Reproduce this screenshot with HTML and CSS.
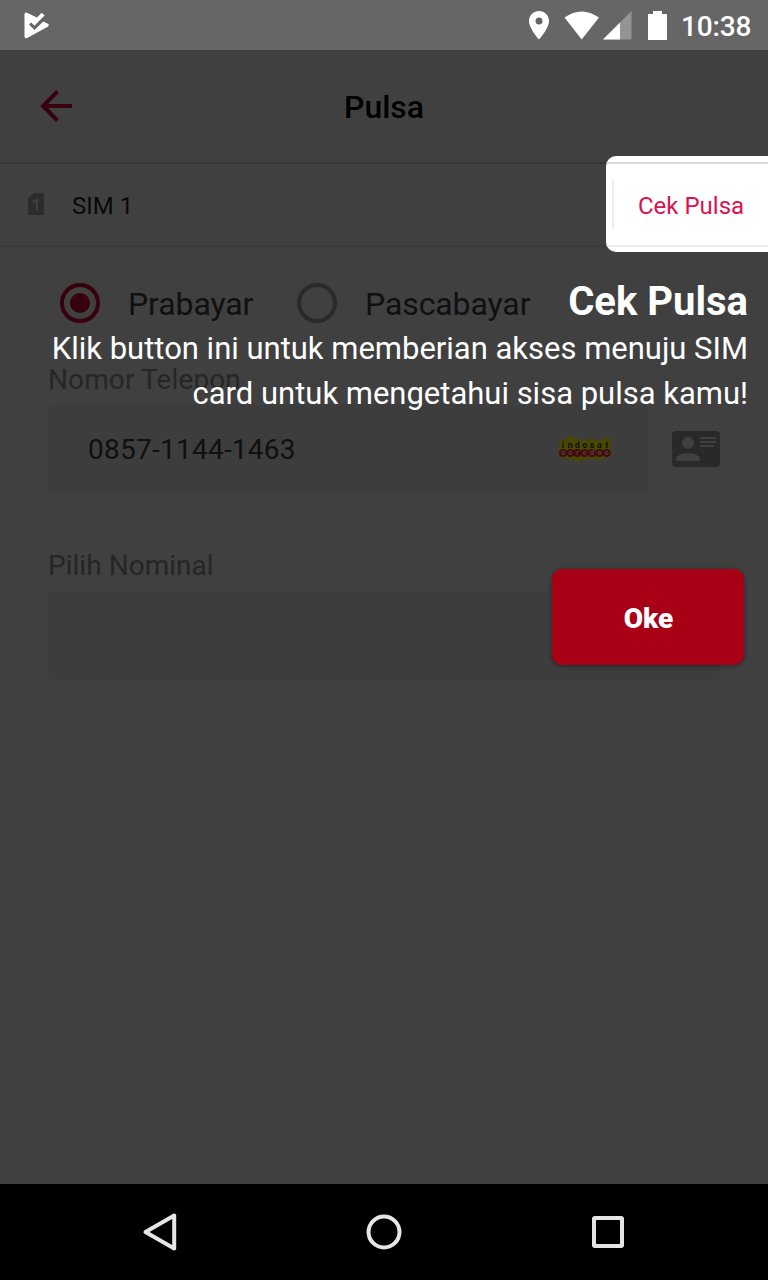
FILE: index.html
```html
<!DOCTYPE html>
<html lang="id">
<head>
<meta charset="utf-8">
<title>Pulsa</title>
<link rel="stylesheet" href="styles.css">
</head>
<body>
<div class="screen">
  <header class="status">
    <svg class="status-app" width="26" height="28" viewBox="0 0 26 28">
      <path d="M.5 2.400Q.6-.2 3 .8L12.900 5.500L17.700 .8L20.600 3.500L10.400 13.800L7.200 10.500L5 12.600L10.400 18L19.300 9.500L23.900 11.700Q26 13 23.700 14.700L3.200 26Q.6 26.900 .5 24.500Z" fill="#fff"/>
    </svg>
    <div class="status-icons">
      <svg width="20" height="29" viewBox="0 0 20 29"><path fill="#fff" fill-rule="evenodd" d="M10 0C4.400 0 0 4.400 0 10C0 17.500 10 28.500 10 28.500S20 17.500 20 10C20 4.400 15.600 0 10 0ZM10 6.500A3.500 3.500 0 1 1 10 13.500A3.500 3.500 0 0 1 10 6.500Z"/></svg>
      <svg class="wifi" width="36" height="29" viewBox="0 0 36 29"><path d="M.5 6.500Q17.500-5.500 35 6.500L17.700 28.500Z" fill="#fff"/></svg>
      <svg class="signal" width="29" height="29" viewBox="0 0 29 29"><path d="M28.500 0V28.500H0Z" fill="#949494"/><path d="M17 11.500V28.500H0Z" fill="#fff"/></svg>
      <svg class="battery" width="19" height="29" viewBox="0 0 19 29"><path d="M5 0H14V3H19V29H0V3H5Z" fill="#fff"/></svg>
      <span class="clock">10:38</span>
    </div>
  </header>

  <div class="topbar">
    <svg class="back" width="32" height="32" viewBox="0 0 32 32"><path d="M32 16H3M17.500 1.500L3 16L17.500 30.500" fill="none" stroke="#37000f" stroke-width="4"/></svg>
    <h1 class="title">Pulsa</h1>
  </div>

  <div class="sim-row">
    <svg class="sim-icon" width="16" height="22" viewBox="0 0 16 22"><path d="M6.500 0H14.500Q16 0 16 1.500V20.500Q16 22 14.500 22H1.500Q0 22 0 20.500V5Z" fill="#2c2c2c"/><path d="M4.500 9.300L8.800 7V17.500" fill="none" stroke="#404040" stroke-width="2"/></svg>
    <span class="sim-name">SIM 1</span>
  </div>

  <main class="form">
    <div class="radios">
      <svg width="40" height="40"><circle cx="20" cy="20" r="18" fill="none" stroke="#37000f" stroke-width="4"/><circle cx="20" cy="20" r="10" fill="#37000f"/></svg>
      <span class="radio-label first">Prabayar</span>
      <svg width="40" height="40"><circle cx="20" cy="20" r="18" fill="none" stroke="#2a2a2a" stroke-width="4"/></svg>
      <span class="radio-label">Pascabayar</span>
    </div>
    <div class="label">Nomor Telepon</div>
    <div class="phone-row">
      <div class="field phone">
        <span>0857-1144-1463</span>
        <svg class="operator" width="54" height="30" viewBox="0 0 54 30">
          <path d="M5 10V20M12.300 6V22M19.300 8V24M26.700 10V22M34 9V21.500M41.300 10V22M48.700 7V20" fill="none" stroke="#4a4800" stroke-width="8" stroke-linecap="round"/>
          <text class="op-top" x="5 12.300 19.300 26.700 34 41.300 48.700" y="13.500">indosat</text>
          <path d="M5 19H48.700" stroke="#45090f" stroke-width="3"/>
          <g fill="#45090f"><circle cx="5" cy="19" r="4"/><circle cx="12.300" cy="19" r="4"/><circle cx="19.300" cy="19" r="4"/><circle cx="26.700" cy="19" r="4"/><circle cx="34" cy="19" r="4"/><circle cx="41.300" cy="19" r="4"/><circle cx="48.700" cy="19" r="4"/></g>
          <text class="op-bottom" x="5 12.300 19.300 26.700 34 41.300 48.700" y="21.300">ooredoo</text>
        </svg>
      </div>
      <svg width="48" height="36" viewBox="0 0 48 36"><rect width="48" height="36" rx="4" fill="#292929"/><g fill="#404040"><circle cx="16" cy="12" r="6"/><path d="M4 30V28C4 24 12 22 16 22S28 24 28 28V30Z"/><path d="M28 6H44V8H28ZM28 10H44V12H28ZM28 14H42V16H28Z"/></g></svg>
    </div>
    <div class="label nominal-label">Pilih Nominal</div>
    <div class="field"></div>
  </main>

  <nav class="nav">
    <svg width="36" height="40" viewBox="0 0 36 40"><path d="M32.200 3.500V36.500L3.500 20Z" fill="none" stroke="#e6e6e6" stroke-width="4" stroke-linejoin="round"/></svg>
    <svg width="36" height="40" viewBox="0 0 36 40"><circle cx="18" cy="20" r="15.500" fill="none" stroke="#e6e6e6" stroke-width="4"/></svg>
    <svg width="36" height="40" viewBox="0 0 36 40"><rect x="4" y="6" width="28" height="28" rx="1" fill="none" stroke="#e6e6e6" stroke-width="4"/></svg>
  </nav>

  <div class="spotlight"><div class="spot-inner"><span class="divider"></span><span class="spot-text">Cek Pulsa</span></div></div>
  <section class="coach">
    <h2>Cek Pulsa</h2>
    <p>Klik button ini untuk memberian akses menuju SIM<br>card untuk mengetahui sisa pulsa kamu!</p>
    <button class="ok">Oke</button>
  </section>
</div>
</body>
</html>
```
FILE: styles.css
```css
* { box-sizing: border-box; }
body { margin: 0; font-family: Roboto, sans-serif; }
svg { display: block; flex: none; }
.screen {
  position: relative;
  width: 768px;
  height: 1280px;
  display: flex;
  flex-direction: column;
  background: #404040;
  overflow: hidden;
}
.status {
  height: 50px;
  padding: 0 17px 0 24px;
  display: flex;
  justify-content: space-between;
  align-items: center;
  background: #666;
  color: #fff;
}
.status-app { margin-top: 1px; }
.status-icons { display: flex; align-items: center; }
.wifi { margin-left: 15px; }
.signal { margin-left: 3px; }
.battery { margin-left: 16px; }
.clock {
  width: 70px;
  margin-left: 14px;
  font-size: 28px;
  font-weight: 500;
  line-height: 32px;
  padding-top: 3px;
  letter-spacing: -.15px;
}
.topbar {
  height: 114px;
  display: grid;
  grid-template-columns: 80px 1fr 80px;
  align-items: center;
  border-bottom: 2px solid #373737;
}
.back { margin-left: 40px; }
.title {
  margin: 2px 0 0;
  text-align: center;
  font-size: 32px;
  font-weight: 500;
  line-height: 40px;
  color: #000;
}
.sim-row {
  height: 83px;
  padding: 0 28px;
  display: flex;
  align-items: center;
  gap: 28px;
  border-bottom: 2px solid #3b3b3b;
  font-size: 24px;
  color: #080808;
}
.sim-icon { margin-bottom: 2px; }
.sim-name, .spot-text { padding-top: 2px; }
.form { flex: 1; padding: 36px 48px 0; }
.radios { display: flex; align-items: center; height: 40px; padding-left: 12px; }
.radio-label {
  margin-left: 28px;
  padding-top: 2px;
  font-size: 32px;
  line-height: 40px;
  letter-spacing: -.1px;
  color: #101010;
}
.first { flex: none; width: 169px; }
.label {
  margin-top: 40px;
  height: 34px;
  font-size: 28px;
  line-height: 34px;
  letter-spacing: .12px;
  color: #262626;
}
.phone-row { display: flex; align-items: center; gap: 24px; margin-top: 8px; }
.field { height: 88px; border-radius: 5px; background: #3d3d3d; }
.phone {
  width: 600px;
  padding: 0 36px 0 40px;
  display: flex;
  align-items: center;
  justify-content: space-between;
  font-size: 28px;
  letter-spacing: .25px;
  color: #101010;
}
.nominal-label { margin-top: 56px; margin-bottom: 8px; letter-spacing: .03px; }
.op-top, .op-bottom { text-anchor: middle; letter-spacing: 0; }
.op-top { font: 700 9px Roboto, sans-serif; fill: #111100; }
.op-bottom { font: 700 7.5px Roboto, sans-serif; fill: #4b4242; }
.nav {
  height: 96px;
  display: flex;
  align-items: center;
  justify-content: space-between;
  padding: 0 142px;
  background: #000;
}
.spotlight {
  position: absolute;
  top: 156px;
  right: 0;
  width: 162px;
  height: 96px;
  padding: 6px 0 5px;
  border-radius: 10px 0 0 10px;
  background: #fff;
  overflow: hidden;
}
.spot-inner {
  height: 85px;
  padding-left: 6px;
  display: flex;
  align-items: center;
  gap: 24px;
  border-top: 2px solid #dadada;
  border-bottom: 2px solid #ededed;
  font-size: 24px;
  color: #d91350;
}
.divider { width: 2px; height: 49px; background: #ededed; }
.coach {
  position: absolute;
  top: 278px;
  right: 20px;
  width: 720px;
  text-align: right;
  color: #fff;
}
.coach h2 { margin: 0; font-size: 40px; font-weight: 700; line-height: 48px; }
.coach p { margin: 0; font-size: 31px; line-height: 45px; letter-spacing: -.01px; white-space: nowrap; }
.ok {
  width: 192px;
  height: 96px;
  margin: 153px 4px 0 0;
  padding: 2px 0 0 1px;
  border: 0;
  border-radius: 10px;
  background: #a80014;
  box-shadow: 0 1px 4px rgba(0, 0, 0, .4);
  color: #fff;
  font: 900 28px Roboto, sans-serif;
}
```
